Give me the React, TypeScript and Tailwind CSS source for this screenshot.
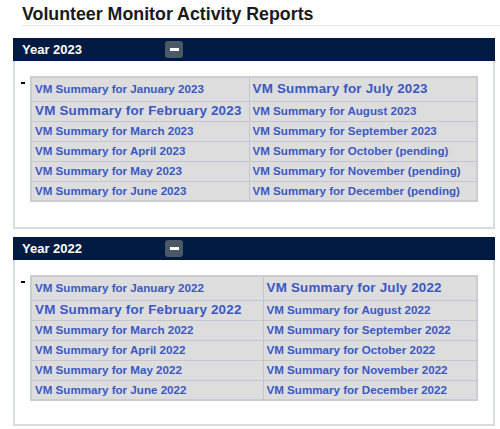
const year2023: [string, string][] = [
  ["VM Summary for January 2023", "VM Summary for July 2023"],
  ["VM Summary for February 2023", "VM Summary for August 2023"],
  ["VM Summary for March 2023", "VM Summary for September 2023"],
  ["VM Summary for April 2023", "VM Summary for October (pending)"],
  ["VM Summary for May 2023", "VM Summary for November (pending)"],
  ["VM Summary for June 2023", "VM Summary for December (pending)"],
];

const year2022: [string, string][] = [
  ["VM Summary for January 2022", "VM Summary for July 2022"],
  ["VM Summary for February 2022", "VM Summary for August 2022"],
  ["VM Summary for March 2022", "VM Summary for September 2022"],
  ["VM Summary for April 2022", "VM Summary for October 2022"],
  ["VM Summary for May 2022", "VM Summary for November 2022"],
  ["VM Summary for June 2022", "VM Summary for December 2022"],
];

function Cell(props: { text: string; big: boolean; width: string }) {
  // the July / February links are a bit larger on the real page
  const size = props.big ? "text-[13.4px] tracking-[0.2px]" : "text-[11.6px]";
  return (
    <td
      className={`${props.width} border border-[#c3c7cb] bg-[#dddddd] p-0 pl-[3px] align-middle leading-[14px] ${size}`}
    >
      <a href="#" className="font-bold text-[#3a58c4] whitespace-nowrap">
        {props.text}
      </a>
    </td>
  );
}

function YearPanel(props: {
  year: string;
  rows: [string, string][];
  left: string;
  right: string;
  bottom: string;
}) {
  return (
    <div className="ml-[13px] mr-[5px] border-2 border-t-0 border-[#d9dcdf]">
      <div className="-mx-[2px] flex h-[23px] items-center bg-[#011a41] pl-[9px]">
        <span className="w-[143px] text-[13px] font-bold text-white">Year {props.year}</span>
        <button className="flex h-[17px] w-[18px] items-center justify-center rounded-[3px] bg-[#4b5967]">
          <span className="block h-[3px] w-[9px] bg-white"></span>
        </button>
      </div>
      <div className={`flex pt-[15px] ${props.bottom}`}>
        <div className="w-[15px] pl-[6px] pt-[6px]">
          <div className="h-[2px] w-[4px] bg-black"></div>
        </div>
        <table className="border-collapse border-2 border-[#c9cdd1]">
          <tbody>
            {props.rows.map((r, i) => (
              <tr key={i} className={i == 0 ? "h-[24px]" : "h-[20px]"}>
                <Cell text={r[0]} big={i == 1} width={props.left} />
                <Cell text={r[1]} big={i == 0} width={props.right} />
              </tr>
            ))}
          </tbody>
        </table>
      </div>
    </div>
  );
}

export default function App() {
  return (
    <div className="h-[429px] w-[500px] bg-white font-['Liberation_Sans',Arial,sans-serif]">
      <h1 className="ml-[22px] border-b border-[#e6e6e6] pt-[4px] text-[17.8px] leading-[21px] font-bold text-[#1a1a1a]">
        Volunteer Monitor Activity Reports
      </h1>
      <div className="h-[12px]"></div>
      <YearPanel
        year="2023"
        rows={year2023}
        left="w-[218px]"
        right="w-[228px]"
        bottom="pb-[25px]"
      />
      <div className="h-[8px]"></div>
      <YearPanel
        year="2022"
        rows={year2022}
        left="w-[232px]"
        right="w-[214px]"
        bottom="pb-[23px]"
      />
    </div>
  );
}
